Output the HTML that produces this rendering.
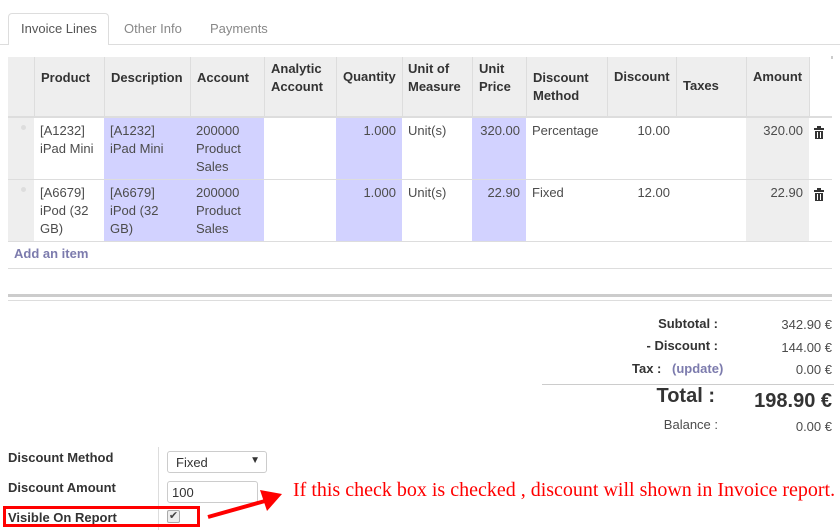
<!DOCTYPE html>
<html><head><meta charset="utf-8"><style>
*{margin:0;padding:0;box-sizing:border-box}
body{width:840px;height:530px;background:#fff;font-family:"Liberation Sans",sans-serif;font-size:13px;color:#4c4c4c;position:relative;overflow:hidden}
.a{position:absolute}
.h{font-weight:bold;color:#333;line-height:18px}
.c{line-height:18px}
.r{text-align:right}
.bg{background:#eee}
.bl{background:#d2d2ff}
.vl{position:absolute;width:1px;background:#ddd}
</style></head><body>
<div class="a" style="left:0;top:44px;width:840px;height:1px;background:#ddd"></div>
<div class="a" style="left:8px;top:13px;width:101px;height:32px;border:1px solid #ddd;border-bottom:none;background:#fff;border-radius:4px 4px 0 0"></div>
<div class="a" style="left:21px;top:21px;color:#555">Invoice Lines</div>
<div class="a" style="left:124px;top:21px;color:#888">Other Info</div>
<div class="a" style="left:210px;top:21px;color:#888">Payments</div>
<div class="a bg" style="left:8px;top:57px;width:801px;height:60px"></div>
<div class="a" style="left:831px;top:56px;width:2px;height:3px;background:#ccc"></div>
<div class="a" style="left:8px;top:116px;width:824px;height:2px;background:#ddd"></div>
<div class="vl" style="left:34px;top:57px;height:60px"></div>
<div class="vl" style="left:104px;top:57px;height:60px"></div>
<div class="vl" style="left:190px;top:57px;height:60px"></div>
<div class="vl" style="left:264px;top:57px;height:60px"></div>
<div class="vl" style="left:336px;top:57px;height:60px"></div>
<div class="vl" style="left:402px;top:57px;height:60px"></div>
<div class="vl" style="left:472px;top:57px;height:60px"></div>
<div class="vl" style="left:526px;top:57px;height:60px"></div>
<div class="vl" style="left:607px;top:57px;height:60px"></div>
<div class="vl" style="left:676px;top:57px;height:60px"></div>
<div class="vl" style="left:746px;top:57px;height:60px"></div>
<div class="vl" style="left:809px;top:57px;height:60px"></div>
<div class="a h" style="left:41px;top:69px">Product</div>
<div class="a h" style="left:111px;top:69px">Description</div>
<div class="a h" style="left:197px;top:69px">Account</div>
<div class="a h" style="left:271px;top:60px">Analytic<br>Account</div>
<div class="a h" style="left:343px;top:68px">Quantity</div>
<div class="a h" style="left:408px;top:60px">Unit of<br>Measure</div>
<div class="a h" style="left:479px;top:60px">Unit<br>Price</div>
<div class="a h" style="left:533px;top:69px">Discount<br>Method</div>
<div class="a h" style="left:614px;top:68px">Discount</div>
<div class="a h" style="left:683px;top:77px">Taxes</div>
<div class="a h" style="left:753px;top:68px">Amount</div>
<div class="a bl" style="left:104px;top:118px;width:160px;height:123px"></div>
<div class="a bl" style="left:336px;top:118px;width:66px;height:123px"></div>
<div class="a bl" style="left:472px;top:118px;width:54px;height:123px"></div>
<div class="a bg" style="left:746px;top:118px;width:63px;height:123px"></div>
<div class="a bg" style="left:8px;top:118px;width:26px;height:123px"></div>
<div class="a" style="left:8px;top:179px;width:824px;height:1px;background:#ddd"></div>
<div class="a" style="left:8px;top:241px;width:824px;height:1px;background:#ddd"></div>
<div class="a" style="left:8px;top:268px;width:824px;height:1px;background:#ddd"></div>
<div class="a" style="left:21px;top:125px;width:5px;height:5px;border-radius:50%;background:#ddd"></div>
<div class="a" style="left:21px;top:187px;width:5px;height:5px;border-radius:50%;background:#ddd"></div>
<div class="a c" style="left:40px;top:122px">[A1232]<br>iPad Mini</div>
<div class="a c" style="left:110px;top:122px">[A1232]<br>iPad Mini</div>
<div class="a c" style="left:196px;top:122px">200000<br>Product<br>Sales</div>
<div class="a c r" style="left:336px;top:122px;width:60px">1.000</div>
<div class="a c" style="left:408px;top:122px">Unit(s)</div>
<div class="a c r" style="left:472px;top:122px;width:48px">320.00</div>
<div class="a c" style="left:532px;top:122px">Percentage</div>
<div class="a c r" style="left:607px;top:122px;width:63px">10.00</div>
<div class="a c r" style="left:746px;top:122px;width:57px">320.00</div>
<div class="a c" style="left:40px;top:184px">[A6679]<br>iPod (32<br>GB)</div>
<div class="a c" style="left:110px;top:184px">[A6679]<br>iPod (32<br>GB)</div>
<div class="a c" style="left:196px;top:184px">200000<br>Product<br>Sales</div>
<div class="a c r" style="left:336px;top:184px;width:60px">1.000</div>
<div class="a c" style="left:408px;top:184px">Unit(s)</div>
<div class="a c r" style="left:472px;top:184px;width:48px">22.90</div>
<div class="a c" style="left:532px;top:184px">Fixed</div>
<div class="a c r" style="left:607px;top:184px;width:63px">12.00</div>
<div class="a c r" style="left:746px;top:184px;width:57px">22.90</div>
<svg class="a" style="left:814px;top:126px" width="10" height="13" viewBox="0 0 10 13"><rect x="0" y="2" width="10" height="2" fill="#333"/><rect x="3" y="0" width="4" height="2" fill="#333"/><rect x="1" y="5" width="8" height="8" fill="#333"/><rect x="3" y="6" width="1" height="6" fill="#fff"/><rect x="6" y="6" width="1" height="6" fill="#fff"/></svg>
<svg class="a" style="left:814px;top:188px" width="10" height="13" viewBox="0 0 10 13"><rect x="0" y="2" width="10" height="2" fill="#333"/><rect x="3" y="0" width="4" height="2" fill="#333"/><rect x="1" y="5" width="8" height="8" fill="#333"/><rect x="3" y="6" width="1" height="6" fill="#fff"/><rect x="6" y="6" width="1" height="6" fill="#fff"/></svg>
<div class="a" style="left:14px;top:246px;font-weight:bold;color:#7c7bad">Add an item</div>
<div class="a" style="left:8px;top:294px;width:824px;height:3px;background:#ccc"></div>
<div class="a" style="left:8px;top:300px;width:824px;height:1px;background:#ddd"></div>
<div class="a h r" style="left:600px;top:315px;width:118px">Subtotal :</div>
<div class="a c r" style="left:740px;top:316px;width:92px">342.90 €</div>
<div class="a h r" style="left:600px;top:337px;width:118px">- Discount :</div>
<div class="a c r" style="left:740px;top:339px;width:92px">144.00 €</div>
<div class="a h" style="left:632px;top:360px">Tax :</div>
<div class="a h" style="left:672px;top:360px;color:#7c7bad">(update)</div>
<div class="a c r" style="left:740px;top:361px;width:92px">0.00 €</div>
<div class="a" style="left:542px;top:384px;width:292px;height:1px;background:#ccc"></div>
<div class="a" style="left:600px;top:385px;width:115px;text-align:right;font-size:20px;font-weight:bold;color:#333">Total :</div>
<div class="a" style="left:700px;top:390px;width:132px;text-align:right;font-size:20px;font-weight:bold;color:#333">198.90 €</div>
<div class="a c r" style="left:600px;top:416px;width:118px">Balance :</div>
<div class="a c r" style="left:740px;top:418px;width:92px">0.00 €</div>
<div class="a" style="left:158px;top:447px;width:1px;height:83px;background:#ddd"></div>
<div class="a h" style="left:8px;top:449px">Discount Method</div>
<div class="a" style="left:167px;top:451px;width:100px;height:22px;border:1px solid #ccc;border-radius:3px;padding:3px 8px;color:#333">Fixed<span style="position:absolute;right:6px;top:3px;font-size:10px">▼</span></div>
<div class="a h" style="left:8px;top:479px">Discount Amount</div>
<div class="a" style="left:167px;top:481px;width:91px;height:22px;border:1px solid #ccc;border-radius:3px;padding:3px 4px;color:#333">100</div>
<div class="a h" style="left:8px;top:509px">Visible On Report</div>
<div class="a" style="left:167px;top:510px;width:13px;height:13px;border:1px solid #aaa;border-radius:2px;background:#eee;font-size:11px;line-height:11px;text-align:center;color:#444">✔</div>
<div class="a" style="left:3px;top:506px;width:197px;height:21px;border:3px solid red"></div>
<svg class="a" style="left:200px;top:485px" width="90" height="40"><line x1="8" y1="32" x2="65" y2="16" stroke="red" stroke-width="4"/><polygon points="60,5 82,9 67,26" fill="red"/></svg>
<div class="a" style="left:293px;top:479px;font-family:'Liberation Serif',serif;font-size:20px;color:red;white-space:nowrap">If this check box is checked , discount will shown in Invoice report.</div>
</body></html>
